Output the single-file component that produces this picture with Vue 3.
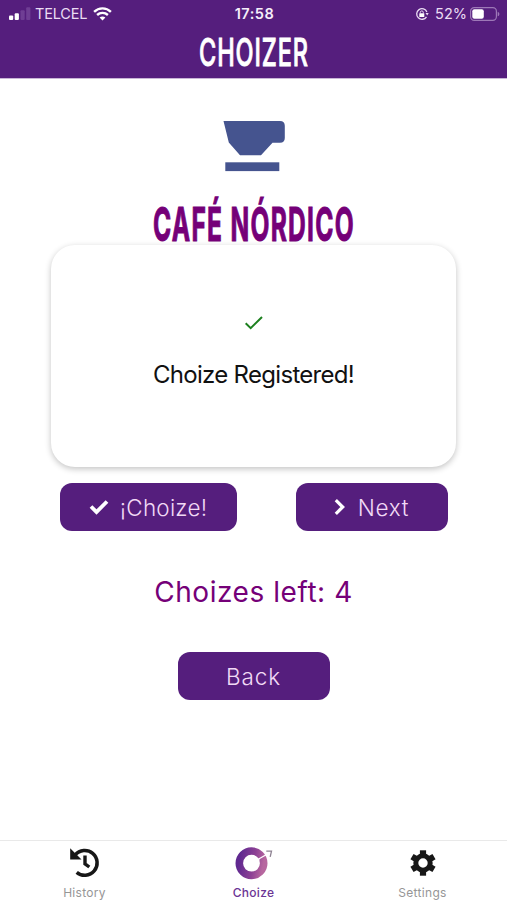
<script setup>
import { ref } from 'vue'

const choicesLeft = ref(4)
const activeTab = ref('choize')
</script>

<template>
  <div class="screen">
    <header class="header">
      <div class="status">
        <div class="status-left">
          <svg class="signal" width="22" height="14" viewBox="0 0 22 14">
            <rect x="0" y="8.5" width="4.2" height="4.5" rx="1" fill="#fff" />
            <rect x="5.7" y="6.3" width="4.2" height="6.7" rx="1" fill="#fff" />
            <rect x="11.5" y="3.3" width="4.2" height="9.7" rx="1" fill="#6f3e94" />
            <rect x="17.2" y="0.3" width="4.2" height="12.7" rx="1" fill="#6f3e94" />
          </svg>
          <span class="carrier">TELCEL</span>
          <svg class="wifi" width="19" height="14" viewBox="0 0 19 14" fill="none" stroke="#fff" stroke-width="2.4">
            <path d="M1.1 4.8C5.8.2 13.2.2 17.9 4.8" />
            <path d="M4.1 8c3.1-2.9 7.7-2.9 10.8 0" />
            <path d="M6.6 10.6c1.7-1.6 4.1-1.6 5.8 0L9.500 13.500z" fill="#fff" stroke="none" />
          </svg>
        </div>
        <span class="clock">17:58</span>
        <div class="status-right">
          <svg class="lock" width="14" height="14" viewBox="0 0 14 14" fill="none" stroke="#eadcf3" stroke-width="1.300">
            <path d="M11.500 9.800A5.300 5.300 0 1 1 11.900 5" />
            <path d="M10.500 6h3.200l-1.500 2.500z" fill="#eadcf3" stroke="none" />
            <rect x="4.300" y="6.300" width="5" height="3.700" rx=".5" fill="#fff" stroke="none" />
            <path d="M5.300 6.500V5.400a1.500 1.500 0 0 1 3 0v1.100" stroke-width="1" />
          </svg>
          <span class="percent">52%</span>
          <svg class="battery" width="30" height="14" viewBox="0 0 30 14">
            <rect x=".6" y=".6" width="25.800" height="12.800" rx="3.600" fill="none" stroke="#9d78b7" stroke-width="1.200" />
            <rect x="2.300" y="2.300" width="11.500" height="9.400" rx="2" fill="#fff" />
            <path d="M27.700 4.700c2.200.8 2.200 3.800 0 4.600z" fill="#9d78b7" />
          </svg>
        </div>
      </div>
      <svg class="brand" width="127" height="50" viewBox="0 0 127 50">
        <text x="9" y="39" textLength="110" lengthAdjust="spacingAndGlyphs">CHOIZER</text>
      </svg>
    </header>

    <main class="content">
      <svg class="cup" width="64" height="52" viewBox="0 0 64 52" fill="#45548f">
        <path d="M.5 1H57q4.800 0 4.800 4.800V18q0 4.800-4.800 4.800H49.500L38 35.300H17L5.800 22.500z" />
        <rect x="2.300" y="42.300" width="54" height="8.800" />
      </svg>
      <svg class="venue" width="240" height="64" viewBox="0 0 240 64">
        <text x="19" y="50" textLength="202" lengthAdjust="spacingAndGlyphs">CAFÉ NÓRDICO</text>
      </svg>

      <section class="card">
        <svg class="tick" width="20" height="16" viewBox="0 0 20 16" fill="none" stroke="#1d801f" stroke-width="2">
          <path d="M1.700 8.200L6.700 13.200 18 2" />
        </svg>
        <p class="message">Choize Registered!</p>
      </section>

      <div class="actions">
        <button class="btn choose">
          <svg width="20" height="16" viewBox="0 0 20 16" fill="none" stroke="#fff" stroke-width="3.800">
            <path d="M2 7.500L7.500 13 18 2.500" />
          </svg>
          <span>¡Choize!</span>
        </button>
        <button class="btn next">
          <svg width="11" height="18" viewBox="0 0 11 18" fill="none" stroke="#fff" stroke-width="3.200">
            <path d="M1.800 2.200L8.700 9 1.800 15.800" />
          </svg>
          <span>Next</span>
        </button>
      </div>

      <p class="remaining">Choizes left: {{ choicesLeft }}</p>
      <button class="btn back"><span>Back</span></button>
    </main>

    <nav class="tabs">
      <a class="tab" :class="{ active: activeTab === 'history' }">
        <svg width="36" height="34" viewBox="0 0 36 34" fill="none" stroke="#171717">
          <path d="M8.200 8.900A12.400 12.400 0 1 1 9.700 26.300" stroke-width="3.500" />
          <path d="M3.200 2.200V13.500H14.500z" fill="#171717" stroke="none" />
          <path d="M18 9.500V17.800L22.300 21" stroke-width="3.400" />
        </svg>
        <span>History</span>
      </a>
      <a class="tab" :class="{ active: activeTab === 'choize' }">
        <svg width="40" height="34" viewBox="0 0 40 34" fill="none">
          <defs>
            <linearGradient id="ring" x1="0" y1="0.300" x2="1" y2="0.500">
              <stop offset="0" stop-color="#602990" />
              <stop offset=".6" stop-color="#8d4195" />
              <stop offset="1" stop-color="#b7679f" />
            </linearGradient>
          </defs>
          <circle cx="17.500" cy="17.200" r="12.200" stroke="url(#ring)" stroke-width="7.600" />
          <path d="M22 14.500L33.500 8" stroke="#fff" stroke-width="1.300" />
          <path d="M22 12l3.500 1-1 4-3-1z" fill="#fff" />
          <path d="M32.300 5.100h5.200l-1.300 5.800" stroke="#8e8292" stroke-width="1.300" />
        </svg>
        <span>Choize</span>
      </a>
      <a class="tab" :class="{ active: activeTab === 'settings' }">
        <svg width="34" height="34" viewBox="0 0 34 34" fill="none" stroke="#171717">
          <circle cx="17" cy="17" r="7.200" stroke-width="5" />
          <g stroke-width="6.200" stroke-linecap="butt">
            <path d="M17 4.300V9.500" />
            <path d="M17 24.500V29.700" />
            <path d="M6 10.650L10.500 13.250" />
            <path d="M23.500 20.750L28 23.350" />
            <path d="M28 10.650L23.500 13.250" />
            <path d="M10.500 20.750L6 23.350" />
          </g>
        </svg>
        <span>Settings</span>
      </a>
    </nav>
  </div>
</template>

<style>
body {
  background: #fff;
}
</style>

<style scoped>
.screen {
  box-sizing: border-box;
  height: 900px;
  display: flex;
  flex-direction: column;
  overflow: hidden;
  font-family: Inter, "Liberation Sans", sans-serif;
}
.screen svg {
  display: block;
  flex: none;
  overflow: visible;
}
.header {
  box-sizing: border-box;
  height: 79px;
  flex: none;
  background: #551e7d;
  border-bottom: 1px solid #c9b5d6;
}
.status {
  display: grid;
  grid-template-columns: 1fr auto 1fr;
  align-items: center;
  height: 27px;
  padding: 0 7px 0 9px;
  color: #eadcf3;
}
.status-left,
.status-right {
  display: flex;
  align-items: center;
}
.status-right {
  justify-content: flex-end;
}
.carrier {
  margin: 0 6px 0 4px;
  font-size: 14.500px;
  letter-spacing: -0.2px;
}
.clock {
  color: #f6eefa;
  font-size: 14.500px;
  font-weight: 600;
  letter-spacing: 0.5px;
}
.percent {
  margin: 0 3px 0 6px;
  font-size: 14.500px;
}
.brand {
  margin: 0 auto;
  fill: #fff;
  stroke: #fff;
  stroke-width: 0.9px;
  font-size: 38px;
  font-weight: 500;
  letter-spacing: 1.500px;
}
.content {
  flex: 1;
  display: flex;
  flex-direction: column;
  align-items: center;
}
.cup {
  margin-left: 2px;
  margin-top: 41px;
}
.venue {
  margin-top: 19px;
  fill: #750078;
  stroke: #750078;
  stroke-width: 1.100px;
  font-size: 47px;
  font-weight: 700;
  letter-spacing: 2.500px;
  position: relative;
  z-index: 1;
}
.card {
  box-sizing: border-box;
  width: 405px;
  height: 222px;
  margin-top: -10px;
  padding-top: 70px;
  display: flex;
  flex-direction: column;
  align-items: center;
  border-radius: 24px;
  background: #fff;
  box-shadow: 0 2px 6px rgba(0, 0, 0, 0.24);
}
.message {
  margin: 29px 0 0;
  color: #111;
  font-size: 24px;
  line-height: 30px;
  letter-spacing: -0.7px;
}
.actions {
  display: flex;
  gap: 59px;
  margin-top: 16px;
}
.btn {
  height: 48px;
  padding: 0;
  display: flex;
  align-items: center;
  justify-content: center;
  border: 0;
  border-radius: 12px;
  background: #551e7d;
  color: #f1d9f5;
  font-family: inherit;
  font-size: 22.500px;
  font-weight: 300;
  letter-spacing: 0.2px;
}
.choose {
  width: 177px;
  gap: 11px;
}
.next {
  width: 152px;
  gap: 13px;
}
.back {
  width: 152px;
  margin-top: 43px;
  letter-spacing: 0.9px;
}
.next span {
  letter-spacing: 0.7px;
}
.remaining {
  margin: 43px 0 0;
  padding-top: 1px;
  margin-bottom: -1px;
  color: #750078;
  font-size: 28px;
  line-height: 35px;
  letter-spacing: 0.55px;
}
.tabs {
  box-sizing: border-box;
  height: 60px;
  flex: none;
  display: grid;
  grid-template-columns: repeat(3, 1fr);
  border-top: 1px solid #e9e9e9;
}
.tab {
  display: flex;
  flex-direction: column;
  align-items: center;
  padding-top: 5px;
  color: #969696;
  font-size: 12px;
  line-height: 16px;
  letter-spacing: 0.300px;
}
.tab span {
  margin-top: 5px;
}
.tab.active {
  color: #6b3494;
  font-weight: 500;
}
</style>
